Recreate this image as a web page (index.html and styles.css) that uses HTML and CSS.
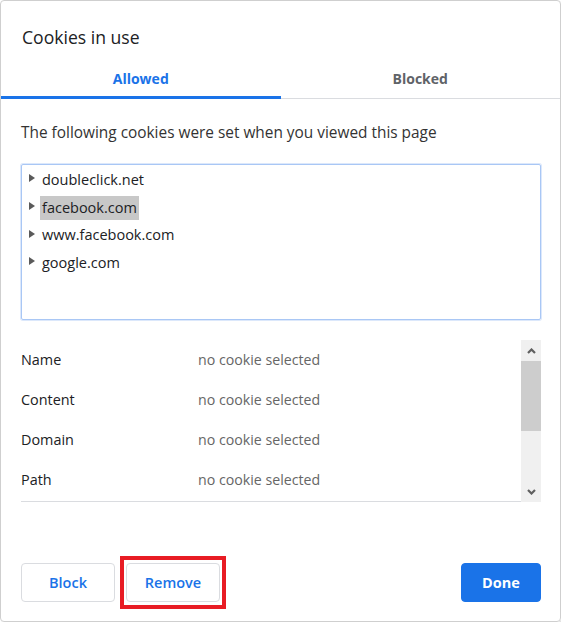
FILE: index.html
```html
<!DOCTYPE html>
<html>
<head>
<meta charset="utf-8">
<link rel="stylesheet" href="styles.css">
</head>
<body>
<div class="dialog">
  <h1 class="title">Cookies in use</h1>
  <div class="tabs">
    <div class="tab active">Allowed</div>
    <div class="tab">Blocked</div>
  </div>
  <div class="content">
    <p class="desc">The following cookies were set when you viewed this page</p>
    <div class="tree">
      <div class="node"><span class="tri"></span><span class="label">doubleclick.net</span></div>
      <div class="node"><span class="tri"></span><span class="label selected">facebook.com</span></div>
      <div class="node"><span class="tri"></span><span class="label">www.facebook.com</span></div>
      <div class="node"><span class="tri"></span><span class="label">google.com</span></div>
    </div>
    <div class="details">
      <div class="rows">
        <div class="row"><span class="key">Name</span><span class="val">no cookie selected</span></div>
        <div class="row"><span class="key">Content</span><span class="val">no cookie selected</span></div>
        <div class="row"><span class="key">Domain</span><span class="val">no cookie selected</span></div>
        <div class="row"><span class="key">Path</span><span class="val">no cookie selected</span></div>
      </div>
      <div class="scrollbar">
        <div class="arrow">
          <svg width="9" height="6" viewBox="0 0 9 6"><path d="M1 5 L4.5 1.5 L8 5" fill="none" stroke="#606060" stroke-width="2.2"/></svg>
        </div>
        <div class="thumb"></div>
        <div class="track"></div>
        <div class="arrow">
          <svg width="9" height="6" viewBox="0 0 9 6"><path d="M1 1 L4.5 4.5 L8 1" fill="none" stroke="#606060" stroke-width="2.2"/></svg>
        </div>
      </div>
    </div>
  </div>
  <div class="buttons">
    <button class="btn">Block</button>
    <div class="mark"><button class="btn">Remove</button></div>
    <button class="btn primary">Done</button>
  </div>
</div>
</body>
</html>
```

FILE: styles.css
```css
html, body {
  margin: 0;
  padding: 0;
  background: #ffffff;
}
body {
  font-family: "Open Sans", "Noto Sans", sans-serif;
  color: #202124;
}
.dialog {
  box-sizing: border-box;
  width: 561px;
  height: 622px;
  border: 1px solid #cfcfcf;
  border-radius: 4px;
  box-shadow: 1px 1px 0 #e2e2e2;
  display: flex;
  flex-direction: column;
}
.title {
  margin: 0;
  padding: 24px 0 0 21px;
  height: 32px;
  font-size: 17.6px;
  font-weight: 400;
  line-height: 24px;
  color: #202124;
}
.tabs {
  display: flex;
  height: 42px;
  box-shadow: inset 0 -1px 0 #dadce0;
}
.tab {
  flex: 1;
  display: flex;
  align-items: center;
  justify-content: center;
  padding-top: 1px;
  font-size: 14px;
  font-weight: 700;
  color: #5f6368;
}
.tab.active {
  color: #1a73e8;
  box-shadow: inset 0 -3px 0 #1a73e8;
}
.content {
  padding: 0 19px 0 20px;
}
.desc {
  margin: 24px 0 0 0;
  font-size: 15.4px;
  line-height: 20px;
  color: #333333;
}
.tree {
  margin-top: 21px;
  height: 153px;
  border: 1px solid #a9c7f5;
  box-shadow: 0 0 0 1px #dce8fb;
  border-radius: 2px;
  padding: 1px 0 0 0;
}
.node {
  height: 27.7px;
  display: flex;
  align-items: center;
  padding-left: 7px;
  font-size: 14.5px;
}
.tri {
  width: 0;
  height: 0;
  border-top: 4.5px solid transparent;
  border-bottom: 4.5px solid transparent;
  border-left: 6px solid #5a5a5a;
  margin-right: 5px;
  margin-top: -3px;
}
.label {
  padding: 2px 2px 3px 2px;
  color: #202124;
}
.label.selected {
  background: #c8c8c8;
}
.details {
  margin-top: 20px;
  display: flex;
  height: 162px;
}
.rows {
  flex: 1;
  border-bottom: 1px solid #dadce0;
}
.row {
  box-sizing: border-box;
  display: flex;
  height: 40px;
  padding-bottom: 1px;
  align-items: center;
  font-size: 14.4px;
}
.key {
  width: 177px;
  color: #202124;
}
.val {
  color: #666666;
  font-size: 14.2px;
}
.scrollbar {
  width: 20px;
  background: #f0f0f0;
  display: flex;
  flex-direction: column;
}
.arrow {
  height: 21px;
  display: flex;
  align-items: center;
  justify-content: center;
}
.thumb {
  height: 70px;
  background: #cdcdcd;
}
.track {
  flex: 1;
}
.buttons {
  margin-top: auto;
  display: flex;
  align-items: center;
  gap: 11px;
  padding: 0 19px 19px 20px;
}
.btn {
  box-sizing: border-box;
  width: 94px;
  height: 39px;
  border: 1px solid #dadce0;
  border-radius: 4px;
  background: #ffffff;
  color: #1a73e8;
  font-family: "Open Sans", "Noto Sans", sans-serif;
  font-size: 14.5px;
  font-weight: 600;
  padding: 0;
}
.mark {
  position: relative;
  display: flex;
}
.mark::after {
  content: "";
  position: absolute;
  left: -6px;
  right: -6px;
  top: -7px;
  bottom: -7px;
  border: 4px solid #e81c24;
}
.btn.primary {
  margin-left: auto;
  width: 80px;
  background: #1a73e8;
  border-color: #1a73e8;
  color: #ffffff;
  font-weight: 700;
}
```
